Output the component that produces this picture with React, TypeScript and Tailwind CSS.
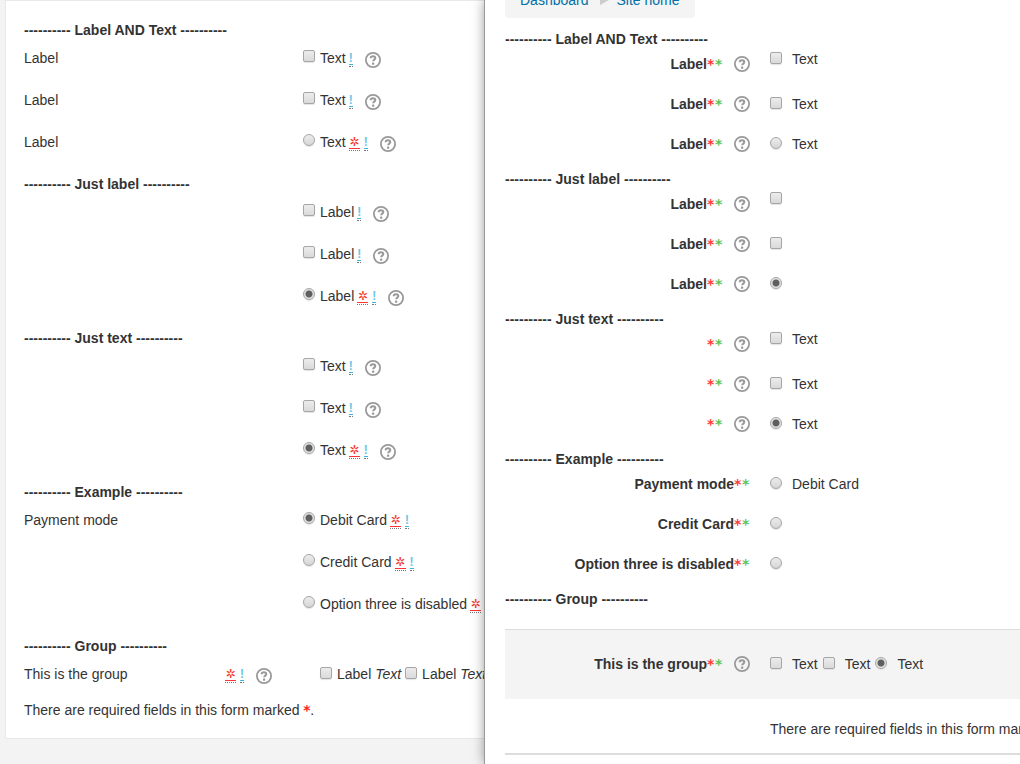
import React from 'react'

type Kind = 'checkbox' | 'radio'

interface Row {
  id: string
  kind: Kind
  label?: string
  text?: string
  checked?: boolean
  required?: boolean
  help?: boolean
}

interface Section {
  title: string
  rows: Row[]
}

const leftSections: Section[] = [
  {
    title: 'Label AND Text',
    rows: [
      { id: 'l-both-1', kind: 'checkbox', label: 'Label', text: 'Text', help: true },
      { id: 'l-both-2', kind: 'checkbox', label: 'Label', text: 'Text', help: true },
      { id: 'l-both-3', kind: 'radio', label: 'Label', text: 'Text', required: true, help: true },
    ],
  },
  {
    title: 'Just label',
    rows: [
      { id: 'l-label-1', kind: 'checkbox', text: 'Label', help: true },
      { id: 'l-label-2', kind: 'checkbox', text: 'Label', help: true },
      { id: 'l-label-3', kind: 'radio', text: 'Label', checked: true, required: true, help: true },
    ],
  },
  {
    title: 'Just text',
    rows: [
      { id: 'l-text-1', kind: 'checkbox', text: 'Text', help: true },
      { id: 'l-text-2', kind: 'checkbox', text: 'Text', help: true },
      { id: 'l-text-3', kind: 'radio', text: 'Text', checked: true, required: true, help: true },
    ],
  },
  {
    title: 'Example',
    rows: [
      { id: 'l-pay-1', kind: 'radio', label: 'Payment mode', text: 'Debit Card', checked: true, required: true },
      { id: 'l-pay-2', kind: 'radio', text: 'Credit Card', required: true },
      { id: 'l-pay-3', kind: 'radio', text: 'Option three is disabled', required: true },
    ],
  },
]

const rightSections: Section[] = [
  {
    title: 'Label AND Text',
    rows: [
      { id: 'r-both-1', kind: 'checkbox', label: 'Label', text: 'Text', help: true },
      { id: 'r-both-2', kind: 'checkbox', label: 'Label', text: 'Text', help: true },
      { id: 'r-both-3', kind: 'radio', label: 'Label', text: 'Text', help: true },
    ],
  },
  {
    title: 'Just label',
    rows: [
      { id: 'r-label-1', kind: 'checkbox', label: 'Label', help: true },
      { id: 'r-label-2', kind: 'checkbox', label: 'Label', help: true },
      { id: 'r-label-3', kind: 'radio', label: 'Label', checked: true, help: true },
    ],
  },
  {
    title: 'Just text',
    rows: [
      { id: 'r-text-1', kind: 'checkbox', text: 'Text', help: true },
      { id: 'r-text-2', kind: 'checkbox', text: 'Text', help: true },
      { id: 'r-text-3', kind: 'radio', text: 'Text', checked: true, help: true },
    ],
  },
  {
    title: 'Example',
    rows: [
      { id: 'r-pay-1', kind: 'radio', label: 'Payment mode', text: 'Debit Card' },
      { id: 'r-pay-2', kind: 'radio', label: 'Credit Card' },
      { id: 'r-pay-3', kind: 'radio', label: 'Option three is disabled' },
    ],
  },
]

const Control = ({ id, kind, checked }: { id: string; kind: Kind; checked?: boolean }) => (
  <input
    id={id}
    type={kind}
    name={id}
    defaultChecked={checked}
    className={
      kind === 'checkbox'
        ? 'size-3 shrink-0 appearance-none rounded-[2px] border border-[#a6a6a6] bg-linear-to-b from-[#ececec] to-[#dadada] shadow-[0_1px_1px_#e4e4e4] checked:bg-[#666]'
        : 'size-3 shrink-0 appearance-none rounded-full border border-[#a6a6a6] bg-linear-to-b from-[#ececec] to-[#d6d6d6] shadow-[0_1px_1px_#e4e4e4] checked:bg-[radial-gradient(circle,#5f5f5f_0_2px,#5f5f5f_3px,#e2e2e2_4px)]'
    }
  />
)

const HelpIcon = () => (
  <button type="button" aria-label="Help" className="size-4 shrink-0">
    <svg viewBox="0 0 16 16" className="size-4" fill="none">
      <circle cx="8" cy="8" r="7.100" stroke="#999" strokeWidth="1.800" />
      <path d="M5.600 6.200C5.700 4.800 6.700 4.200 7.900 4.200c1.400 0 2.400.7 2.400 1.900 0 1.500-2.100 1.600-2.100 3.200" stroke="#999" strokeWidth="2" />
      <rect x="7" y="10.600" width="2.200" height="2.200" rx=".6" fill="#999" />
    </svg>
  </button>
)

const Required = () => (
  <abbr
    title="Required"
    className="flex h-[14px] w-[11px] shrink-0 items-start border-b border-dotted border-[#777] no-underline"
  >
    <span className="flex h-3 w-full items-center justify-center border-b border-[#f33] pb-[2px] font-['DejaVu_Sans'] text-xs font-bold text-[#f43a30]">
      ✲
    </span>
  </abbr>
)

const Advanced = () => (
  <abbr
    title="Advanced"
    className="flex h-[14px] w-1 shrink-0 items-start border-b border-dotted border-[#777] no-underline"
  >
    <span className="flex h-3 w-full items-center justify-center border-b border-[#3bb5dc] pb-[2px] text-xs font-bold text-[#6cc6e2]">
      !
    </span>
  </abbr>
)

const Title = ({ children }: { children: string }) => (
  <h2 className="font-bold whitespace-nowrap">---------- {children} ----------</h2>
)

const LeftRow = ({ row }: { row: Row }) => (
  <div className="flex h-7">
    <div className="w-[279px] shrink-0">{row.label}</div>
    <div className="flex shrink-0 items-center whitespace-nowrap">
      <div className="mr-[5px] flex pb-1">
        <Control id={row.id} kind={row.kind} checked={row.checked} />
      </div>
      <label htmlFor={row.id}>{row.text}</label>
      <div className="ml-[3px] flex gap-1 pt-1">
        {row.required && <Required />}
        <Advanced />
      </div>
      {row.help && (
        <div className="ml-3 flex pt-1">
          <HelpIcon />
        </div>
      )}
    </div>
  </div>
)

const LeftPanel = () => (
  <section className="min-w-0 overflow-hidden bg-[#f3f3f3] pl-[5px] leading-7">
    <form className="flex flex-col gap-[14px] border border-[#e8e8e8] bg-white pt-[15px] pb-[14px] pl-[18px]">
      {leftSections.map((section) => (
        <div key={section.title}>
          <Title>{section.title}</Title>
          <div className="flex flex-col gap-[14px]">
            {section.rows.map((row) => (
              <LeftRow key={row.id} row={row} />
            ))}
          </div>
        </div>
      ))}
      <div>
        <Title>Group</Title>
        <div className="flex h-7 items-center whitespace-nowrap">
          <div className="w-[201px] shrink-0">This is the group</div>
          <div className="flex shrink-0 gap-1 pt-1">
            <Required />
            <Advanced />
          </div>
          <div className="mr-12 ml-3 flex pt-1">
            <HelpIcon />
          </div>
          {['l-group-1', 'l-group-2'].map((id) => (
            <div key={id} className="mr-1 flex shrink-0 items-center">
              <div className="mr-[5px] flex pb-[2px]">
                <Control id={id} kind="checkbox" />
              </div>
              <label htmlFor={id}>
                Label <em>Text</em>
              </label>
            </div>
          ))}
        </div>
        <p className="mt-2 whitespace-nowrap">
          There are required fields in this form marked{' '}
          <span className="inline-block w-[7px] font-['DejaVu_Sans'] font-bold text-[#f22]">*</span>.
        </p>
      </div>
    </form>
  </section>
)

const Stars = () => (
  <span className="font-['DejaVu_Sans'] font-bold">
    <span className="inline-block w-2 text-[#ff3b3b]">*</span>
    <span className="inline-block w-2 text-[#5cc45c]">*</span>
  </span>
)

// label column of the right hand form, help icon included
const RightLabel = ({ row }: { row: Row }) => (
  <div className="flex h-5 w-[245px] shrink-0 items-center justify-end font-bold">
    <label htmlFor={row.id} className="whitespace-nowrap">
      {row.label}
      <Stars />
    </label>
    {row.help && (
      <div className="ml-[11px] flex">
        <HelpIcon />
      </div>
    )}
  </div>
)

const RightSection = ({ section }: { section: Section }) => (
  <div>
    <Title>{section.title}</Title>
    <div className="flex flex-col gap-5">
      {section.rows.map((row, i) => (
        <div key={row.id} className="flex items-start">
          <div className={i === 0 ? 'pt-[5px]' : ''}>
            <RightLabel row={row} />
          </div>
          {/* checkboxes in a first row sit tight under the title */}
          <div className={i === 0 && row.kind === 'radio' ? 'ml-5 flex items-center pt-[5px]' : 'ml-5 flex h-5 items-center'}>
            <div className="flex pb-[2px]">
              <Control id={row.id} kind={row.kind} checked={row.checked} />
            </div>
            {row.text && (
              <label htmlFor={row.id} className="ml-[10px]">
                {row.text}
              </label>
            )}
          </div>
        </div>
      ))}
    </div>
  </div>
)

const groupItems: Row[] = [
  { id: 'r-group-1', kind: 'checkbox' },
  { id: 'r-group-2', kind: 'checkbox' },
  { id: 'r-group-3', kind: 'radio', checked: true },
]

const RightPanel = () => (
  <section className="relative min-w-0 bg-white pl-5 leading-5 shadow-[-1px_0_0_#999,0_0_12px_rgba(0,0,0,0.45)]">
    <div className="overflow-hidden">
      <nav className="-mt-[18px] flex w-fit items-center rounded-[4px] bg-[#f4f4f4] px-[15px] py-2 text-[#0070a8]">
        <a href="#dashboard">Dashboard</a>
        <svg viewBox="0 0 9 10" className="mr-[8px] ml-[11px] h-[10px] w-[9px]">
          <path d="M0 0L9 5L0 10Z" fill="#ccc" />
        </svg>
        <a href="#home">Site home</a>
      </nav>
      <form className="mt-[11px]">
        <div className="flex flex-col gap-[15px]">
          {rightSections.map((section) => (
            <RightSection key={section.title} section={section} />
          ))}
          <Title>Group</Title>
        </div>
        <div className="mt-5 flex h-[70px] items-center border-t border-[#ddd] bg-[#f4f4f4] pb-[2px]">
          <RightLabel row={{ id: 'r-group-1', kind: 'checkbox', label: 'This is the group', help: true }} />
          <div className="ml-5 flex items-center gap-[5px]">
            {groupItems.map((item) => (
              <div key={item.id} className="flex items-center gap-[10px]">
                <div className="flex pb-[2px]">
                  <Control id={item.id} kind={item.kind} checked={item.checked} />
                </div>
                <label htmlFor={item.id}>Text</label>
              </div>
            ))}
          </div>
        </div>
        <p className="mt-5 ml-[265px] whitespace-nowrap">
          There are required fields in this form marked <span className="text-[#f22]">*</span>.
        </p>
      </form>
      <hr className="mt-[14px] border-t-2 border-[#ddd]" />
    </div>
  </section>
)

export default function App() {
  return (
    <main className="grid min-h-screen grid-cols-[485fr_535fr] overflow-hidden bg-white font-['Liberation_Sans',Arial,sans-serif] text-sm text-[#333]">
      <LeftPanel />
      <RightPanel />
    </main>
  )
}
